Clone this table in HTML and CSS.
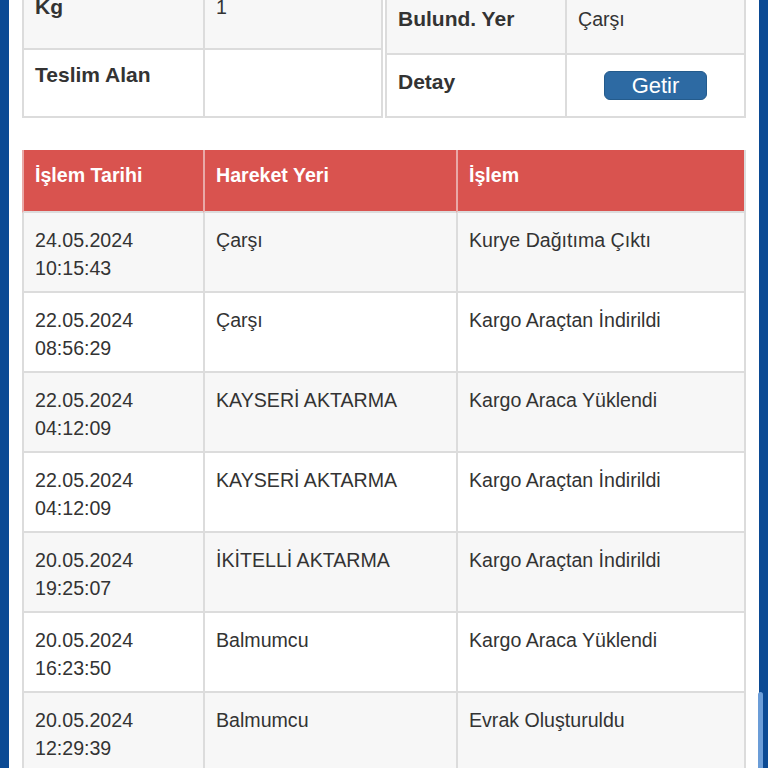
FILE: index.html
```html
<!DOCTYPE html>
<html lang="tr">
<head>
<meta charset="utf-8">
<title>Kargo Takip</title>
<link rel="stylesheet" href="styles.css">
</head>
<body>
<div class="page">
  <div class="top">
    <table class="info info-left">
      <colgroup><col class="c-label-l"><col></colgroup>
      <tr class="odd"><th>Kg</th><td>1</td></tr>
      <tr><th>Teslim Alan</th><td></td></tr>
    </table>
    <table class="info info-right">
      <colgroup><col class="c-label-r"><col></colgroup>
      <tr class="odd"><th>Bulund. Yer</th><td>Çarşı</td></tr>
      <tr><th class="detay">Detay</th><td class="btn-cell"><button class="btn" type="button">Getir</button></td></tr>
    </table>
  </div>

  <table class="moves">
    <colgroup><col class="c1"><col class="c2"><col class="c3"></colgroup>
    <thead>
      <tr><th>İşlem Tarihi</th><th>Hareket Yeri</th><th>İşlem</th></tr>
    </thead>
    <tbody>
      <tr class="odd"><td>24.05.2024<br>10:15:43</td><td>Çarşı</td><td>Kurye Dağıtıma Çıktı</td></tr>
      <tr><td>22.05.2024<br>08:56:29</td><td>Çarşı</td><td>Kargo Araçtan İndirildi</td></tr>
      <tr class="odd"><td>22.05.2024<br>04:12:09</td><td>KAYSERİ AKTARMA</td><td>Kargo Araca Yüklendi</td></tr>
      <tr><td>22.05.2024<br>04:12:09</td><td>KAYSERİ AKTARMA</td><td>Kargo Araçtan İndirildi</td></tr>
      <tr class="odd"><td>20.05.2024<br>19:25:07</td><td>İKİTELLİ AKTARMA</td><td>Kargo Araçtan İndirildi</td></tr>
      <tr><td>20.05.2024<br>16:23:50</td><td>Balmumcu</td><td>Kargo Araca Yüklendi</td></tr>
      <tr class="odd"><td>20.05.2024<br>12:29:39</td><td>Balmumcu</td><td>Evrak Oluşturuldu</td></tr>
    </tbody>
  </table>
</div>
<div class="scroll-thumb"></div>
</body>
</html>
```

FILE: styles.css
```css
html, body {
  margin: 0;
  padding: 0;
  height: 100%;
  overflow: hidden;
}

body {
  background: #0b4a94;
  font-family: "Liberation Sans", Arial, Helvetica, sans-serif;
  color: #333333;
  position: relative;
}

.page {
  margin: 0 9px;
  padding: 0 13px;
  background: #ffffff;
  min-height: 100%;
}

.top {
  display: flex;
  align-items: flex-end;
  gap: 2px;
  margin-top: -18px;
}

table {
  border-collapse: separate;
  border-spacing: 0;
  table-layout: fixed;
}

.info {
  width: 361px;
}

.c-label-l { width: 181px; }
.c-label-r { width: 180px; }

.info th,
.info td {
  border-left: 2px solid #dcdcdc;
  border-bottom: 2px solid #dcdcdc;
  vertical-align: top;
  text-align: left;
  line-height: 28px;
}

.info th:last-child,
.info td:last-child {
  border-right: 2px solid #dcdcdc;
}

.info th {
  font-size: 21px;
  font-weight: bold;
  color: #333333;
}

.info td {
  font-size: 19.6px;
}

.info-left th,
.info-left td {
  padding: 11px 11px 27px 11px;
}

.info-right th,
.info-right td {
  padding: 13px 11px 20px 11px;
}

.info tr.odd th,
.info tr.odd td {
  background: #f7f7f7;
}

.info-right td.btn-cell {
  text-align: center;
  padding-bottom: 16px;
}

.btn {
  display: block;
  margin: 3px auto 0;
  width: 103px;
  height: 29px;
  padding: 0;
  border: 1px solid #245b8c;
  border-radius: 6px;
  background: #2d6aa3;
  color: #ffffff;
  font-family: "Liberation Sans", Arial, Helvetica, sans-serif;
  font-size: 22px;
  line-height: 27px;
}

.moves {
  width: 724px;
  margin-top: 32px;
}

.c1 { width: 181px; }
.c2 { width: 253px; }
.c3 { width: 290px; }

.moves th,
.moves td {
  border-left: 2px solid #dcdcdc;
  border-bottom: 2px solid #dcdcdc;
  text-align: left;
  vertical-align: top;
  line-height: 28px;
  font-size: 19.6px;
}

.moves th:last-child,
.moves td:last-child {
  border-right: 2px solid #dcdcdc;
}

.moves th {
  background: #d9534f;
  color: #ffffff;
  font-weight: bold;
  padding: 11px 11px 22px 11px;
  border-left-color: #e9a9a7;
  border-right-color: #e9a9a7;
}

.moves td {
  padding: 13px 11px 9px 11px;
  background: #ffffff;
}

.moves tr.odd td {
  background: #f7f7f7;
}

.scroll-thumb {
  position: absolute;
  left: 758px;
  top: 692px;
  width: 5px;
  height: 90px;
  border-radius: 3px;
  background: #6b9dd8;
}
```
